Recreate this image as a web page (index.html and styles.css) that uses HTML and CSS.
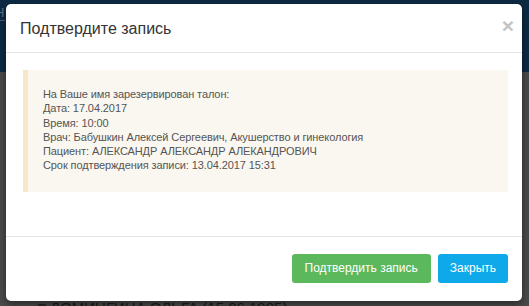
FILE: index.html
```html
<!DOCTYPE html>
<html lang="ru">
<head>
<meta charset="utf-8">
<link rel="stylesheet" href="styles.css">
</head>
<body>
<div class="page">
  <div class="page-top">
    <span class="page-link">Н</span>
  </div>
  <div class="page-main">
    <div class="page-row"><span class="page-box"></span>ДОМИНГИНА ОЛЬГА (15.06.1985)</div>
  </div>
</div>
<div class="modal">
  <div class="modal-header">
    <h4 class="modal-title">Подтвердите запись</h4>
    <span class="close">×</span>
  </div>
  <div class="modal-body">
    <div class="alert">
      <div>На Ваше имя зарезервирован талон:</div>
      <div>Дата: 17.04.2017</div>
      <div>Время: 10:00</div>
      <div>Врач: Бабушкин Алексей Сергеевич, Акушерство и гинекология</div>
      <div>Пациент: АЛЕКСАНДР АЛЕКСАНДР АЛЕКАНДРОВИЧ</div>
      <div>Срок подтверждения записи: 13.04.2017 15:31</div>
    </div>
  </div>
  <div class="modal-footer">
    <button class="btn btn-success">Подтвердить запись</button>
    <button class="btn btn-info">Закрыть</button>
  </div>
</div>
</body>
</html>
```

FILE: styles.css
```css
html, body {
  margin: 0;
  padding: 0;
  width: 529px;
  height: 306px;
  overflow: hidden;
  font-family: "Liberation Sans", Arial, sans-serif;
}
.page {
  display: flex;
  flex-direction: column;
  height: 306px;
}
.page-top {
  height: 72px;
  background: #0d2b45;
  flex: none;
}
.page-link {
  display: block;
  color: #5d7283;
  font-size: 13px;
  line-height: 14px;
  padding-top: 6px;
  margin-left: -5px;
  border-bottom: 1px solid #4b6072;
  width: 10px;
}
.page-main {
  flex: 1;
  background: #4a4b4a;
  display: flex;
  flex-direction: column;
  justify-content: flex-end;
}
.page-row {
  color: #1b1b1b;
  font-size: 15px;
  line-height: 15px;
  padding-left: 38px;
  margin-bottom: -9px;
  display: flex;
  align-items: center;
  gap: 4px;
}
.page-box {
  width: 8px;
  height: 8px;
  background: #2a2a2a;
}
.modal {
  position: absolute;
  left: 6px;
  top: 4px;
  width: 516px;
  height: 297px;
  background: #fff;
  border-radius: 5px;
  box-shadow: 0 3px 9px rgba(0,0,0,0.5);
  display: flex;
  flex-direction: column;
}
.modal-header {
  height: 48px;
  border-bottom: 1px solid #e5e5e5;
  display: flex;
  align-items: center;
  justify-content: space-between;
  padding: 0 8px 0 14px;
  box-sizing: content-box;
}
.modal-title {
  margin: 0;
  font-weight: normal;
  font-size: 16px;
  line-height: 22px;
  color: #333;
  padding-top: 2px;
}
.close {
  font-size: 21px;
  font-weight: bold;
  color: #c4c4c4;
  line-height: 20px;
  margin-top: -4px;
}
.modal-body {
  padding: 17px 14px 0 17px;
  height: 166px;
}
.alert {
  background: #faf7f0;
  border-left: 5px solid #f7e6c8;
  padding: 17px 15px 19px 15px;
  font-size: 11px;
  line-height: 14.3px;
  color: #555;
  letter-spacing: -0.1px;
}
.modal-footer {
  border-top: 1px solid #e5e5e5;
  padding: 17px 14px 0 14px;
  display: flex;
  justify-content: flex-end;
  gap: 7px;
}
.btn {
  font-family: "Liberation Sans", Arial, sans-serif;
  font-size: 12px;
  line-height: 17px;
  padding: 6px 13px;
  border: none;
  border-radius: 3px;
  color: #fff;
  height: 29px;
}
.btn-success {
  background: #5cb85c;
}
.btn-info {
  background: #0fa9ea;
  padding: 6px 12px;
}
```
